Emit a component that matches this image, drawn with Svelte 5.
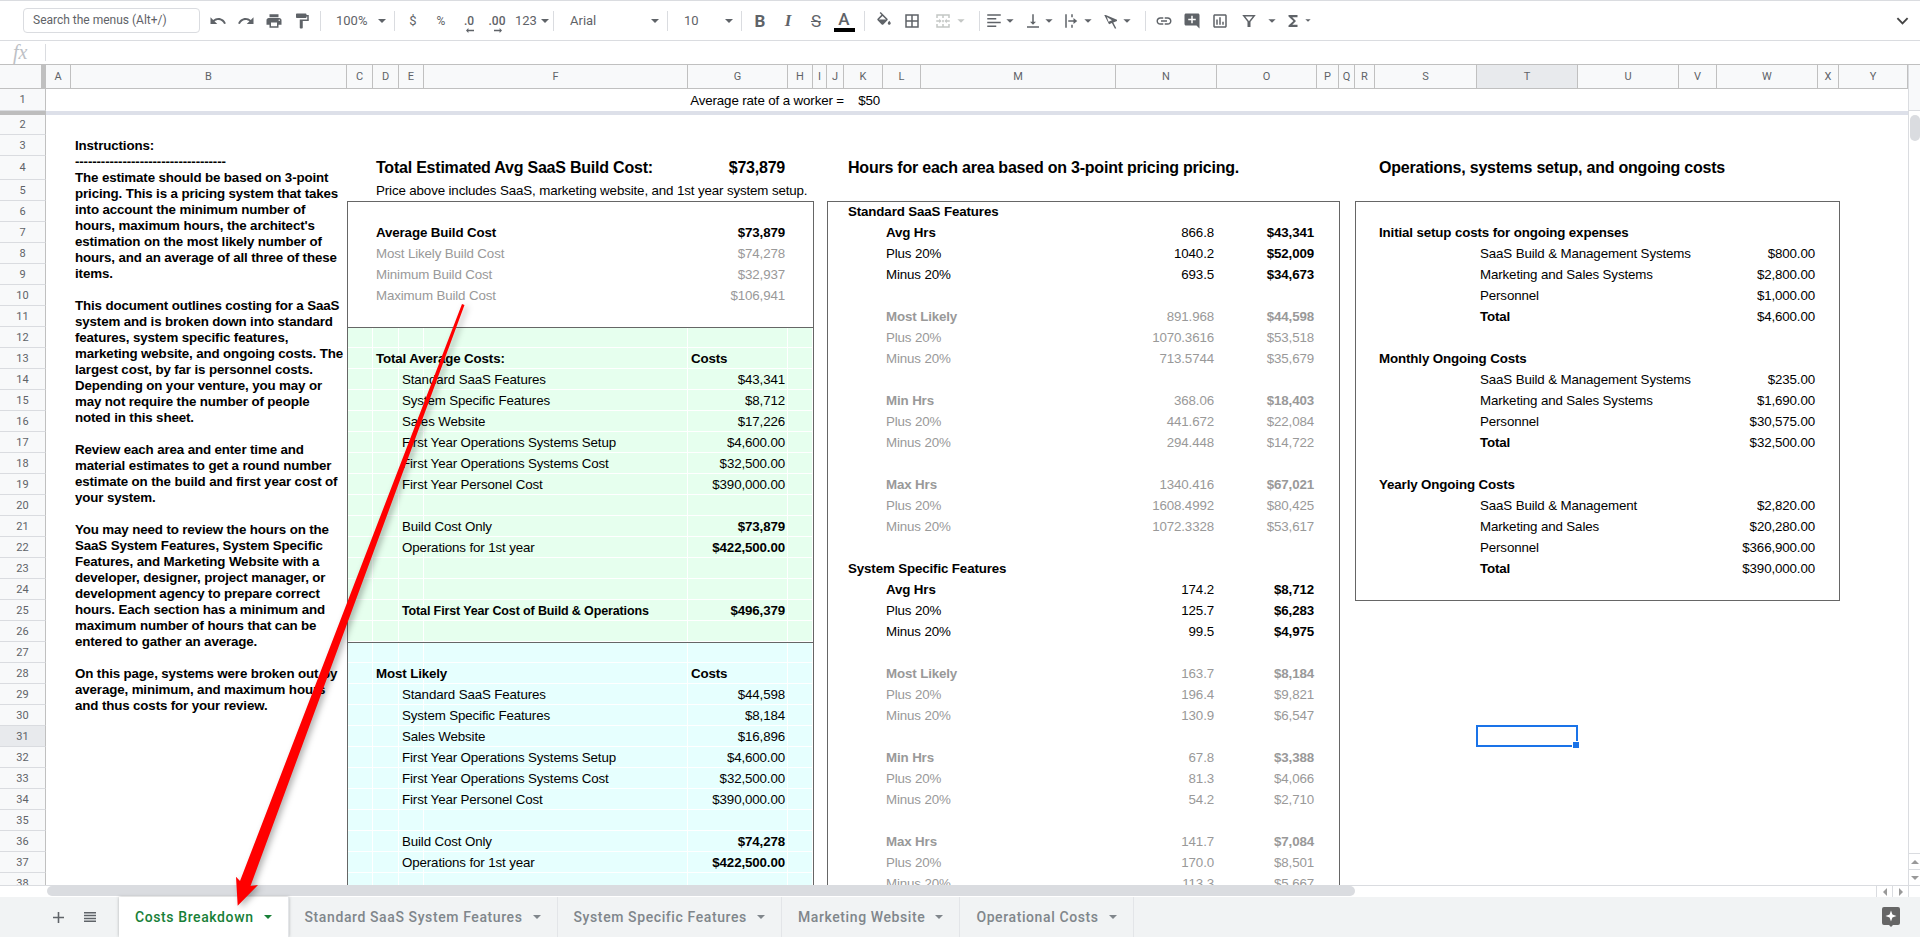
<script lang="ts">
    const colNames = 'A B C D E F G H I J K L M N O P Q R S T U V W X Y'.split(' ');
    const colWidths = [25, 276, 26, 26, 25, 264, 100, 25, 14, 17, 39, 38, 195, 101, 100, 22, 16, 20, 102, 101, 101, 38, 101, 21, 69];
    const rowCount = 38;

    const col = (name: string) => colNames.indexOf(name) + 2;
    // sheet row 1 sits on grid line 2, the freeze bar on 3, the rest follow
    const line = (r: number) => (r === 1 ? 2 : r + 2);
    const area = (r: number, c: string, r2 = r, c2 = c) =>
        `grid-area: ${line(r)} / ${col(c)} / ${line(r2) + 1} / ${col(c2) + 1}`;

    const gridTemplate = `grid-template-columns: 46px ${colWidths.map((w) => w + 'px').join(' ')}; grid-template-rows: 24px 22px 4px 20px 21px 24px repeat(${rowCount - 4}, 21px)`;

    type Cell = { r: number; c: string; t: string; cls: string };
    const cells: Cell[] = [];
    const add = (r: number, c: string, t: string, cls = '') => cells.push({ r, c, t, cls });

    add(1, 'J', 'Average rate of a worker =', 'right flush');
    add(1, 'K', '$50', 'right');

    // first column of estimates
    add(4, 'D', 'Total Estimated Avg SaaS Build Cost:', 'big');
    add(4, 'G', '$73,879', 'big right');
    add(5, 'D', 'Price above includes SaaS, marketing website, and 1st year system setup.');
    add(7, 'D', 'Average Build Cost', 'bold');
    add(7, 'G', '$73,879', 'bold right');
    [['Most Likely Build Cost', '$74,278'], ['Minimum Build Cost', '$32,937'], ['Maximum Build Cost', '$106,941']].forEach(([a, b], i) => {
        add(8 + i, 'D', a, 'grey');
        add(8 + i, 'G', b, 'grey right');
    });

    const costBlock = (start: number, title: string, vals: string[], build: string) => {
        add(start, 'D', title, 'bold');
        add(start, 'G', 'Costs', 'bold');
        ['Standard SaaS Features', 'System Specific Features', 'Sales Website', 'First Year Operations Systems Setup', 'First Year Operations Systems Cost', 'First Year Personel Cost'].forEach((label, i) => {
            add(start + 1 + i, 'E', label);
            add(start + 1 + i, 'G', vals[i], 'right');
        });
        add(start + 8, 'E', 'Build Cost Only');
        add(start + 8, 'G', build, 'bold right');
        add(start + 9, 'E', 'Operations for 1st year');
        add(start + 9, 'G', '$422,500.00', 'bold right');
    };
    costBlock(13, 'Total Average Costs:', ['$43,341', '$8,712', '$17,226', '$4,600.00', '$32,500.00', '$390,000.00'], '$73,879');
    add(25, 'E', 'Total First Year Cost of Build & Operations', 'bold tight');
    add(25, 'G', '$496,379', 'bold right');
    costBlock(28, 'Most Likely', ['$44,598', '$8,184', '$16,896', '$4,600.00', '$32,500.00', '$390,000.00'], '$74,278');

    // hours column
    add(4, 'K', 'Hours for each area based on 3-point pricing pricing.', 'big pad');
    const hours = (start: number, title: string, rows: string[][]) => {
        add(start, 'K', title, 'bold pad');
        rows.forEach((group, g) => {
            const r = start + 1 + g * 4;
            const tone = g === 0 ? '' : 'grey';
            const strong = g === 0 ? 'bold' : 'bold grey';
            add(r, 'L', ['Avg Hrs', 'Most Likely', 'Min Hrs', 'Max Hrs'][g], strong);
            add(r, 'N', group[0], `${tone} right`);
            add(r, 'O', group[1], `${strong} right`);
            add(r + 1, 'L', 'Plus 20%', tone);
            add(r + 1, 'N', group[2], `${tone} right`);
            add(r + 1, 'O', group[3], `${g === 0 ? 'bold' : 'grey'} right`);
            add(r + 2, 'L', 'Minus 20%', tone);
            add(r + 2, 'N', group[4], `${tone} right`);
            add(r + 2, 'O', group[5], `${g === 0 ? 'bold' : 'grey'} right`);
        });
    };
    hours(6, 'Standard SaaS Features', [
        ['866.8', '$43,341', '1040.2', '$52,009', '693.5', '$34,673'],
        ['891.968', '$44,598', '1070.3616', '$53,518', '713.5744', '$35,679'],
        ['368.06', '$18,403', '441.672', '$22,084', '294.448', '$14,722'],
        ['1340.416', '$67,021', '1608.4992', '$80,425', '1072.3328', '$53,617']
    ]);
    hours(23, 'System Specific Features', [
        ['174.2', '$8,712', '125.7', '$6,283', '99.5', '$4,975'],
        ['163.7', '$8,184', '196.4', '$9,821', '130.9', '$6,547'],
        ['67.8', '$3,388', '81.3', '$4,066', '54.2', '$2,710'],
        ['141.7', '$7,084', '170.0', '$8,501', '113.3', '$5,667']
    ]);

    // operations column
    add(4, 'S', 'Operations, systems setup, and ongoing costs', 'big pad');
    const ops = (start: number, title: string, rows: string[][]) => {
        add(start, 'S', title, 'bold pad');
        rows.forEach(([a, b], i) => {
            add(start + 1 + i, 'T', a, i === 3 ? 'bold' : '');
            add(start + 1 + i, 'W', b, 'right');
        });
    };
    ops(7, 'Initial setup costs for ongoing expenses', [['SaaS Build & Management Systems', '$800.00'], ['Marketing and Sales Systems', '$2,800.00'], ['Personnel', '$1,000.00'], ['Total', '$4,600.00']]);
    ops(13, 'Monthly Ongoing Costs', [['SaaS Build & Management Systems', '$235.00'], ['Marketing and Sales Systems', '$1,690.00'], ['Personnel', '$30,575.00'], ['Total', '$32,500.00']]);
    ops(19, 'Yearly Ongoing Costs', [['SaaS Build & Management', '$2,820.00'], ['Marketing and Sales', '$20,280.00'], ['Personnel', '$366,900.00'], ['Total', '$390,000.00']]);

    const instructions = [
        '-----------------------------------',
        'The estimate should be based on 3-point',
        'pricing. This is a pricing system that takes',
        'into account the minimum number of',
        "hours, maximum hours, the architect's",
        'estimation on the most likely number of',
        'hours, and an average of all three of these',
        'items.',
        '',
        'This document outlines costing for a SaaS',
        'system and is broken down into standard',
        'features, system specific features,',
        'marketing website, and ongoing costs. The',
        'largest cost, by far is personnel costs.',
        'Depending on your venture, you may or',
        'may not require the number of people',
        'noted in this sheet.',
        '',
        'Review each area and enter time and',
        'material estimates to get a round number',
        'estimate on the build and first year cost of',
        'your system.',
        '',
        'You may need to review the hours on the',
        'SaaS System Features, System Specific',
        'Features, and Marketing Website with a',
        'developer, designer, project manager, or',
        'development agency to prepare correct',
        'hours. Each section has a minimum and',
        'maximum number of hours that can be',
        'entered to gather an average.',
        '',
        'On this page, systems were broken out by',
        'average, minimum, and maximum hours',
        'and thus costs for your review.'
    ].join('\n');

    const tintCols = ['C', 'D', 'E', 'F', 'G', 'H'];
    const tintRows = Array.from({ length: rowCount - 11 }, (_, i) => i + 12);
    const rowNums = Array.from({ length: rowCount }, (_, i) => i + 1);

    const tabs = ['Costs Breakdown', 'Standard SaaS System Features', 'System Specific Features', 'Marketing Website', 'Operational Costs'];

    const icons = {
        undo: 'M12.5 8c-2.65 0-5.05.99-6.9 2.6L2 7v9h9l-3.62-3.62c1.39-1.16 3.16-1.88 5.12-1.88 3.54 0 6.55 2.31 7.6 5.5l2.37-.78C21.08 11.03 17.15 8 12.5 8z',
        redo: 'M18.4 10.6C16.55 8.99 14.15 8 11.5 8c-4.65 0-8.58 3.03-9.96 7.22L3.9 16c1.05-3.19 4.05-5.5 7.6-5.5 1.95 0 3.73.72 5.12 1.88L13 16h9V7l-3.6 3.6z',
        print: 'M19 8H5c-1.66 0-3 1.34-3 3v6h4v4h12v-4h4v-6c0-1.66-1.34-3-3-3zm-3 11H8v-5h8v5zm3-7c-.55 0-1-.45-1-1s.45-1 1-1 1 .45 1 1-.45 1-1 1zm-1-9H6v4h12V3z',
        paint: 'M18 4V3c0-.55-.45-1-1-1H5c-.55 0-1 .45-1 1v4c0 .55.45 1 1 1h12c.55 0 1-.45 1-1V6h1v4H9v11c0 .55.45 1 1 1h2c.55 0 1-.45 1-1v-9h8V4h-3z',
        fill: 'M16.56 8.94L7.62 0 6.21 1.41l2.38 2.38-5.15 5.15c-.59.59-.59 1.54 0 2.12l5.5 5.5c.29.29.68.44 1.06.44s.77-.15 1.06-.44l5.5-5.5c.59-.58.59-1.53 0-2.12zM5.21 10L10 5.21 14.79 10H5.21zM19 11.5s-2 2.17-2 3.5c0 1.1.9 2 2 2s2-.9 2-2c0-1.33-2-3.5-2-3.5z',
        borders: 'M3 3v18h18V3H3zm8 16H5v-6h6v6zm0-8H5V5h6v6zm8 8h-6v-6h6v6zm0-8h-6V5h6v6z',
        merge: 'M3 3h18v5h-2V5H13v3h-2V5H5v3H3zM3 16h2v3h6v-3h2v3h6v-3h2v5H3zM11 10.5h2v3h-2zM3 11h4V9l3 3-3 3v-2H3zM21 11h-4V9l-3 3 3 3v-2h4z',
        align: 'M3 3h18v2H3zM3 8h12v2H3zM3 13h18v2H3zM3 18h12v2H3z',
        valign: 'M16 13h-3V3h-2v10H8l4 4 4-4zM4 19v2h16v-2H4z',
        wrap: 'M3 3h2v18H3zM11 3h2v4h-2zM11 17h2v4h-2zM7 11h7V8l5 4-5 4v-3H7z',
        rotate: 'M3 4h2l15 6.200v1.700l-5 2.100 4 7.500-1.700.800-4.100-7.600-3.800 1.600zM6.500 6.800l2.200 6.100 4.600-2z',
        link: 'M3.9 12c0-1.71 1.39-3.1 3.1-3.1h4V7H7c-2.76 0-5 2.24-5 5s2.24 5 5 5h4v-1.9H7c-1.71 0-3.1-1.39-3.1-3.1zM8 13h8v-2H8v2zm9-6h-4v1.9h4c1.71 0 3.1 1.39 3.1 3.1s-1.39 3.1-3.1 3.1h-4V17h4c2.76 0 5-2.24 5-5s-2.24-5-5-5z',
        comment: 'M20 2H4c-1.1 0-2 .9-2 2v12c0 1.1.9 2 2 2h14l4 4V4c0-1.1-.9-2-2-2zm-3 9h-4v4h-2v-4H7V9h4V5h2v4h4v2z',
        chart: 'M9 17H7v-7h2v7zm4 0h-2V7h2v10zm4 0h-2v-4h2v4zm2 2H5V5h14v14zm0-16H5c-1.1 0-2 .9-2 2v14c0 1.1.9 2 2 2h14c1.1 0 2-.9 2-2V5c0-1.1-.9-2-2-2z',
        filter: 'M3 4h18l-7 9v7h-4v-7zM7 6l5 6.4L17 6z',
        sum: 'M18 4H6v2l6.5 6L6 18v2h12v-3h-7l5-5-5-5h7z'
    };
</script>

{#snippet icon(d: string)}
    <svg class="icon" viewBox="0 0 24 24"><path {d} fill-rule="evenodd" /></svg>
{/snippet}

<div class="page">
    <header class="toolbar">
        <div class="search">Search the menus (Alt+/)</div>
        <span class="btn">{@render icon(icons.undo)}</span>
        <span class="btn">{@render icon(icons.redo)}</span>
        <span class="btn">{@render icon(icons.print)}</span>
        <span class="btn">{@render icon(icons.paint)}</span>
        <i class="sep"></i>
        <span class="select zoom">100%<b class="caret"></b></span>
        <i class="sep"></i>
        <span class="btn txt">$</span>
        <span class="btn txt small">%</span>
        <span class="btn txt dec">.0<svg class="dec-arrow" viewBox="0 0 10 6"><path d="M0 3l3-3v2h7v2H3v2z" /></svg></span>
        <span class="btn txt dec">.00<svg class="dec-arrow" viewBox="0 0 10 6"><path d="M10 3L7 0v2H0v2h7v2z" /></svg></span>
        <span class="select num">123<b class="caret"></b></span>
        <i class="sep"></i>
        <span class="select font">Arial<b class="caret"></b></span>
        <i class="sep"></i>
        <span class="select size">10<b class="caret"></b></span>
        <i class="sep"></i>
        <span class="btn fmt bold-b">B</span>
        <span class="btn fmt ital">I</span>
        <span class="btn fmt strike">S</span>
        <span class="btn fmt color">A<b class="swatch"></b></span>
        <i class="sep wide"></i>
        <span class="btn">{@render icon(icons.fill)}</span>
        <span class="btn">{@render icon(icons.borders)}</span>
        <span class="group merge">{@render icon(icons.merge)}<b class="caret"></b></span>
        <i class="sep wide"></i>
        <span class="group">{@render icon(icons.align)}<b class="caret"></b></span>
        <span class="group">{@render icon(icons.valign)}<b class="caret"></b></span>
        <span class="group">{@render icon(icons.wrap)}<b class="caret"></b></span>
        <span class="group">{@render icon(icons.rotate)}<b class="caret"></b></span>
        <i class="sep"></i>
        <span class="btn">{@render icon(icons.link)}</span>
        <span class="btn">{@render icon(icons.comment)}</span>
        <span class="btn">{@render icon(icons.chart)}</span>
        <span class="group filter">{@render icon(icons.filter)}<b class="caret"></b></span>
        <span class="group">{@render icon(icons.sum)}<b class="caret tiny"></b></span>
        <svg class="chevron" viewBox="0 0 14 10"><path d="M1.5 2L7 7.5 12.5 2" /></svg>
    </header>

    <div class="formula">
        <span class="fx">fx</span>
        <i class="fx-sep"></i>
    </div>

    <div class="workspace">
        <div class="sheet" style={gridTemplate}>
            <div class="corner" style="grid-area: 1 / 1 / 2 / 2"></div>
            {#each colNames as name}
                <div class="col-head" class:active={name === 'T'} style={`grid-area: 1 / ${col(name)} / 2 / ${col(name) + 1}`}>{name}</div>
            {/each}
            {#each rowNums as r}
                <div class="row-head" class:active={r === 31} style={`grid-area: ${line(r)} / 1 / ${line(r) + 1} / 2`}>{r}</div>
            {/each}
            <div class="freeze-head" style="grid-area: 3 / 1 / 4 / 2"></div>
            <div class="freeze" style="grid-area: 3 / 2 / 4 / -1"></div>

            {#each tintRows as r}
                {#each tintCols as c}
                    <div class="tint" class:green={r <= 26} class:cyan={r > 26} style={area(r, c)}></div>
                {/each}
            {/each}

            <div class="box" style={area(6, 'C', 11, 'H')}></div>
            <div class="box" style={area(12, 'C', 26, 'H')}></div>
            <div class="box" style={area(27, 'C', rowCount, 'H')}></div>
            <div class="box" style={area(6, 'J', rowCount, 'P')}></div>
            <div class="box" style={area(6, 'R', 24, 'X')}></div>

            <div class="cell bold pad" style={area(3, 'B')}>Instructions:</div>
            <div class="notes" style={area(4, 'B', 33, 'B')}>{instructions}</div>

            {#each cells as cell}
                <div class="cell {cell.cls}" style={area(cell.r, cell.c)}><span>{cell.t}</span></div>
            {/each}

            <div class="selection" style={area(31, 'T')}><b class="handle"></b></div>
        </div>

        <div class="vscroll">
            <div class="vs-head"></div>
            <div class="vs-track"><div class="vs-thumb"></div></div>
            <div class="vs-btn"><b class="tri up"></b></div>
            <div class="vs-btn"><b class="tri down"></b></div>
        </div>
    </div>

    <div class="hscroll">
        <div class="hs-track"><div class="hs-thumb"></div></div>
        <div class="hs-btn"><b class="tri left"></b></div>
        <div class="hs-btn"><b class="tri right"></b></div>
        <div class="hs-end"></div>
    </div>

    <footer class="tabbar">
        <span class="tab-tool add">
            <svg viewBox="0 0 14 14"><path d="M6 0h2v6h6v2H8v6H6V8H0V6h6z" /></svg>
        </span>
        <span class="tab-tool list">
            <svg viewBox="0 0 12 10"><path d="M0 0h12v1.500H0zM0 2.800h12v1.500H0zM0 5.700h12v1.500H0zM0 8.500h12V10H0z" /></svg>
        </span>
        {#each tabs as tab, i}
            <div class="tab" class:current={i === 0}>{tab}<b class="caret"></b></div>
        {/each}
        <span class="explore">
            <svg viewBox="0 0 18 20">
                <path class="explore-bg" d="M2 0h14a2 2 0 0 1 2 2v14a2 2 0 0 1-2 2h-5l-2 2-2-2H2a2 2 0 0 1-2-2V2a2 2 0 0 1 2-2z" />
                <path class="explore-star" d="M9 3.500l1.400 4.100 4.100 1.400-4.100 1.400L9 14.500l-1.400-4.100L3.500 9l4.100-1.400z" />
            </svg>
        </span>
    </footer>

    <svg class="arrow" viewBox="0 0 1920 937">
        <path d="M462 304 L464.500 305 L250.500 886 L258 885 L237.700 905.700 L236 876.700 L240 881 Z" />
    </svg>
</div>

<style>
    :global(body) {
        margin: 0;
        background: #fff;
    }

    .page {
        position: relative;
        display: flex;
        flex-direction: column;
        width: 1920px;
        height: 937px;
        overflow: hidden;
        font-family: 'Liberation Sans', Arial, sans-serif;
        font-size: 13.33px;
        color: #000;
    }

    /* toolbar */
    .toolbar {
        display: flex;
        align-items: center;
        box-sizing: border-box;
        height: 41px;
        flex: none;
        padding-left: 23px;
        border-top: 1px solid #dadce0;
        border-bottom: 1px solid #dadce0;
        font-family: Roboto, sans-serif;
        font-size: 13px;
        color: #5f6368;
    }

    .search {
        box-sizing: border-box;
        width: 177px;
        height: 25px;
        margin-right: 4px;
        padding-left: 9px;
        border: 1px solid #dadce0;
        border-radius: 4px;
        font-size: 12px;
        line-height: 23px;
    }

    .btn {
        position: relative;
        display: flex;
        flex: none;
        align-items: center;
        justify-content: center;
        width: 28px;
        height: 24px;
    }

    .icon {
        flex: none;
        width: 18px;
        height: 18px;
        fill: #5f6368;
    }

    .sep {
        flex: none;
        width: 1px;
        height: 20px;
        margin: 0 4px;
        background: #dadce0;
    }

    .sep.wide {
        margin: 0 5px 0 6px;
    }

    .caret {
        flex: none;
        width: 0;
        height: 0;
        border-left: 4px solid transparent;
        border-right: 4px solid transparent;
        border-top: 4px solid #5f6368;
    }

    .caret.tiny {
        border-left-width: 3px;
        border-right-width: 3px;
        border-top-width: 3px;
    }

    .select {
        display: flex;
        flex: none;
        align-items: center;
        justify-content: space-between;
        box-sizing: border-box;
        padding-right: 4px;
    }

    .zoom {
        width: 65px;
        padding-left: 11px;
    }

    .num {
        width: 38px;
        padding-left: 4px;
        padding-right: 0;
    }

    .font {
        width: 95px;
        padding-left: 2px;
        margin-left: 10px;
    }

    .size {
        width: 65px;
        padding-left: 12px;
    }

    .txt.small {
        font-size: 12px;
    }

    .dec {
        font-size: 12px;
        font-weight: 500;
    }

    .dec-arrow {
        position: absolute;
        left: 11px;
        top: 19px;
        width: 8px;
        height: 5px;
        fill: #5f6368;
    }

    .fmt {
        font-size: 17px;
        font-weight: 500;
    }

    .bold-b {
        font-weight: 700;
    }

    .ital {
        font-family: 'Liberation Serif', serif;
        font-style: italic;
        font-weight: 700;
    }

    .strike {
        font-weight: 400;
        text-decoration: line-through;
    }

    .color {
        align-items: flex-start;
        line-height: 20px;
    }

    .swatch {
        position: absolute;
        left: 4px;
        top: 19px;
        width: 21px;
        height: 4px;
        background: #000;
    }

    .group {
        display: flex;
        flex: none;
        align-items: center;
        box-sizing: border-box;
        width: 39px;
        height: 24px;
    }

    .group .icon {
        margin-right: 3px;
    }

    .group .caret {
        transform: scale(0.9);
    }

    .merge {
        width: 47px;
        padding-left: 8px;
    }

    .merge .icon {
        fill: #c4c7c5;
    }

    .merge .caret {
        border-top-color: #c4c7c5;
        margin-left: 2px;
    }

    .filter {
        width: 50px;
        padding-left: 6px;
    }

    .filter .caret {
        margin-left: 7px;
    }

    .chevron {
        width: 13px;
        height: 10px;
        margin-left: auto;
        margin-right: 11px;
        fill: none;
        stroke: #444;
        stroke-width: 2;
    }

    /* formula bar */
    .formula {
        display: flex;
        align-items: center;
        flex: none;
        height: 23px;
    }

    .fx {
        width: 45px;
        padding-left: 13px;
        box-sizing: border-box;
        font-family: 'Liberation Serif', serif;
        font-style: italic;
        font-size: 20px;
        color: #bdc1c6;
    }

    .fx-sep {
        width: 1px;
        height: 17px;
        background: #dadce0;
    }

    /* sheet */
    .workspace {
        display: flex;
        flex: none;
        height: 821px;
        overflow: hidden;
        border-top: 1px solid #c0c0c0;
        box-sizing: border-box;
    }

    .sheet {
        display: grid;
        flex: none;
        position: relative;
        width: 1908px;
        height: max-content;
    }

    .corner,
    .col-head,
    .row-head {
        display: flex;
        align-items: center;
        justify-content: center;
        box-sizing: border-box;
        background: #f8f9fa;
        border-right: 1px solid #c0c0c0;
        border-bottom: 1px solid #c0c0c0;
        font-family: Roboto, sans-serif;
        font-size: 11px;
        color: #5f6368;
    }

    .corner {
        border-right: 5px solid #c0c0c0;
    }

    .row-head {
        border-bottom-color: #dadce0;
    }

    .col-head.active,
    .row-head.active {
        background: #e8eaed;
    }

    .freeze-head {
        background: #bdbdbd;
    }

    .freeze {
        background: #dde0e9;
    }

    .tint {
        box-sizing: border-box;
        border-right: 1px solid #fff;
        border-bottom: 1px solid #fff;
    }

    .green {
        background: #e6ffee;
    }

    .cyan {
        background: #e6fffe;
    }

    .box {
        box-sizing: border-box;
        margin-right: -1px;
        margin-bottom: -1px;
        border: 1px solid #666;
    }

    .cell {
        display: flex;
        align-items: center;
        min-width: 0;
        padding: 0 3px;
        box-sizing: border-box;
        white-space: nowrap;
        letter-spacing: -0.13px;
    }

    .cell.pad {
        padding-left: 4px;
    }

    .cell.right {
        justify-content: flex-end;
    }

    .cell.flush {
        padding-right: 0;
    }

    .cell span {
        flex: none;
    }

    .cell.bold {
        font-weight: 700;
    }

    .cell.tight {
        font-size: 12.5px;
    }

    .cell.big {
        font-size: 16px;
        font-weight: 700;
        letter-spacing: -0.22px;
    }

    .cell.grey {
        color: #999;
    }

    .notes {
        min-width: 0;
        padding: 0 3px 0 4px;
        margin-top: -2px;
        line-height: 16px;
        font-weight: 700;
        letter-spacing: -0.13px;
        white-space: pre;
    }

    .selection {
        position: relative;
        box-sizing: border-box;
        margin: -1px 0 0 -1px;
        border: 2px solid #1a73e8;
    }

    .handle {
        position: absolute;
        right: -4px;
        bottom: -4px;
        width: 6px;
        height: 6px;
        background: #1a73e8;
        border: 1px solid #fff;
    }

    /* scrollbars */
    .vscroll {
        display: flex;
        flex-direction: column;
        flex: none;
        width: 12px;
        box-sizing: border-box;
        border-left: 1px solid #dadce0;
    }

    .vs-head {
        height: 45px;
        flex: none;
        background: #f8f9fa;
        border-bottom: 1px solid #dadce0;
    }

    .vs-track {
        flex: 1;
    }

    .vs-thumb {
        width: 10px;
        height: 26px;
        margin: 4px 0 0 1px;
        background: #dadce0;
        border-radius: 5px;
    }

    .vs-btn {
        display: flex;
        align-items: center;
        justify-content: center;
        height: 16px;
        flex: none;
        border-top: 1px solid #dadce0;
        box-sizing: border-box;
    }

    .tri {
        width: 0;
        height: 0;
        border: 4px solid transparent;
    }

    .tri.up {
        border-top: 0;
        border-bottom-color: #999;
    }

    .tri.down {
        border-bottom: 0;
        border-top-color: #999;
    }

    .tri.left {
        border-left: 0;
        border-right-color: #999;
    }

    .tri.right {
        border-right: 0;
        border-left-color: #999;
    }

    .hscroll {
        display: flex;
        flex: none;
        height: 12px;
        box-sizing: border-box;
        border-top: 1px solid #dadce0;
    }

    .hs-track {
        flex: 1;
        padding-left: 47px;
    }

    .hs-thumb {
        width: 1308px;
        height: 10px;
        background: #dadce0;
        border-radius: 5px;
    }

    .hs-btn {
        display: flex;
        align-items: center;
        justify-content: center;
        flex: none;
        width: 16px;
        box-sizing: border-box;
        border-left: 1px solid #dadce0;
    }

    .hs-end {
        width: 12px;
        flex: none;
        box-sizing: border-box;
        border-left: 1px solid #dadce0;
    }

    /* tabs */
    .tabbar {
        display: flex;
        flex: 1;
        background: #f1f3f4;
        font-family: Roboto, sans-serif;
        font-size: 14px;
        font-weight: 500;
        letter-spacing: 0.6px;
        color: #80868b;
    }

    .tab-tool {
        display: flex;
        align-items: center;
        flex: none;
    }

    .add svg {
        width: 11px;
        height: 11px;
        fill: #5f6368;
    }

    .list svg {
        width: 12px;
        height: 10px;
        fill: #5f6368;
    }

    .add {
        margin-left: 53px;
    }

    .list {
        margin-left: 20px;
        margin-right: 23px;
    }

    .tab {
        display: flex;
        align-items: center;
        flex: none;
        gap: 10px;
        padding: 0 16px 0 16px;
        border-right: 1px solid #e3e5e8;
    }

    .tab .caret {
        border-top-color: #80868b;
    }

    .tab.current {
        position: relative;
        background: #fff;
        color: #188038;
        box-shadow: 0 0 3px rgba(60, 64, 67, 0.35);
    }

    .tab.current .caret {
        border-top-color: #188038;
    }

    .explore {
        display: flex;
        align-items: center;
        margin-left: auto;
        margin-right: 20px;
    }

    .explore svg {
        width: 18px;
        height: 20px;
    }

    .explore-bg {
        fill: #666;
    }

    .explore-star {
        fill: #fff;
    }

    .arrow {
        position: absolute;
        inset: 0;
        width: 1920px;
        height: 937px;
        pointer-events: none;
        filter: drop-shadow(3px 2px 3px rgba(0, 0, 0, 0.3));
    }

    .arrow path {
        fill: #f00;
    }
</style>
